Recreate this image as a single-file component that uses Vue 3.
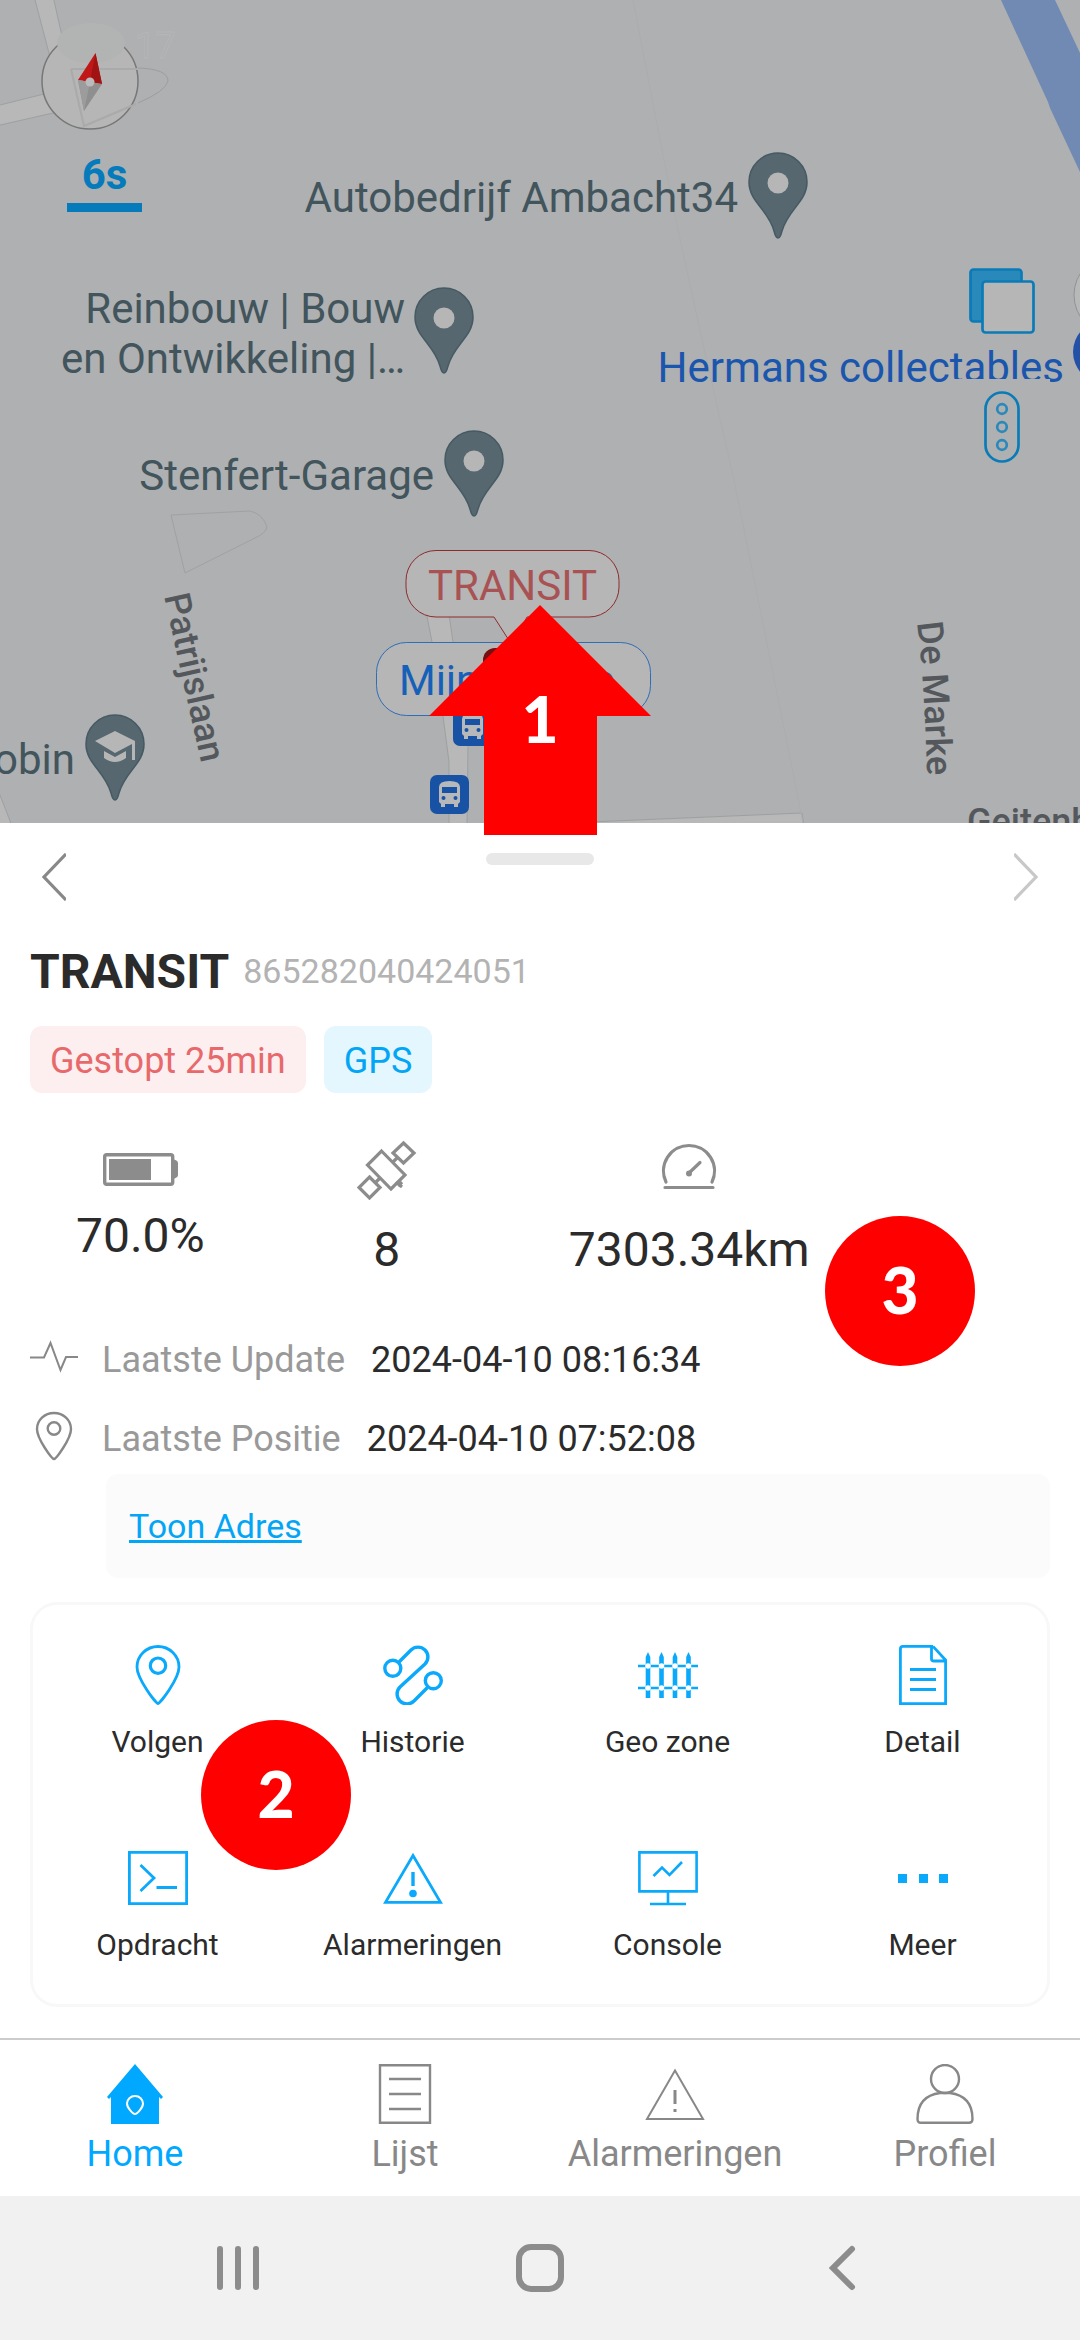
<template>
  <div class="app">
    <section class="map">
      <svg class="map-canvas" viewBox="0 0 1080 823">
        <!-- roads and water -->
        <g fill="#b7b8b7" stroke="#9da0a3" stroke-width="1">
          <path d="M-4 106 L48 93 L56 90 L50 57 L34 -4 H53 L64 45 L80 100 L53 113 L-4 126 Z" />
          <path d="M-2 790 L12 826 H-2 Z" />
          <path d="M420 580 L432 642 L443 716 L449 762 V826 H467 L468 745 L453 642 L444 580 Z" />
          <path d="M590 822 L802 813 L804 826 H590 Z" />
        </g>
        <path d="M1001 0 H1055 L1080 53 V172 L1050 108 L1048 102 Z" fill="#718ab3" />
        <path d="M633 0 L662 150 L678 230 L705 353 L734 480 L781 713 L803 823" fill="none" stroke="#abadae" />
        <path d="M171 515 L250 511 Q263 514 267 527 Q266 533 255 538 L185 573 Z" fill="none" stroke="#9fa1a2" />
        <path d="M138 68 Q168 69 168 81 Q166 91 138 103" fill="none" stroke="#9b9d9e" />

        <text x="135" y="58" class="clock">17</text>

        <!-- compass -->
        <circle cx="90" cy="81" r="48" fill="#b5b6b5" stroke="#777" stroke-width="1.5" />
        <ellipse cx="91" cy="43" rx="34" ry="20" fill="#b2b4b3" />
        <path d="M71 69 H138 M71 69 L84 126 L136 104" fill="none" stroke="#a9aaa9" stroke-width="2" />
        <path d="M95.500 53 L78 80 L102 84 Z" fill="#c01818" />
        <path d="M95.500 53 L90 82 L102 84 Z" fill="#a01414" />
        <path d="M84 111 L78 80 L102 84 Z" fill="#8f8f8f" />
        <path d="M84 111 L78 80 L90 82 Z" fill="#9c9c9c" />
        <circle cx="90" cy="82" r="4.500" fill="#bbb" />

        <!-- places -->
        <g class="place">
          <text x="738" y="212" text-anchor="end">Autobedrijf Ambacht34</text>
          <text x="405" y="323" text-anchor="end">Reinbouw | Bouw</text>
          <text x="405" y="373" text-anchor="end">en Ontwikkeling |…</text>
          <text x="434" y="490" text-anchor="end">Stenfert-Garage</text>
          <text x="75" y="774" text-anchor="end">Robin</text>
        </g>
        <g v-for="pin in pins" :key="pin.x" :transform="`translate(${pin.x} ${pin.y})`">
          <path
            d="M0 86 C-2 86 -3 83 -4 79 C-10 57 -29 50 -29 30 A29 29 0 0 1 29 30 C29 50 10 57 4 79 C3 83 2 86 0 86 Z"
            fill="#56676f"
            stroke="#465a63"
            stroke-width="1.5"
          />
          <circle v-if="!pin.school" cy="31" r="10.500" fill="#b6b6b6" />
          <g v-else fill="#b6b6b6">
            <path d="M0 17 L20 27 V46 H17 V30 L0 39 L-20 27 Z" />
            <path d="M-11 37 L0 43 L11 37 V44 Q0 52 -11 44 Z" />
          </g>
        </g>
        <text x="1064" y="382" text-anchor="end" class="shop">Hermans collectables</text>
        <path d="M948 379 H1050 V392 H948 Z" fill="#aeb0b1" />
        <circle cx="1114" cy="295" r="40" fill="#b7b9b9" stroke="#909394" />
        <circle cx="1104" cy="352" r="31" fill="#2450a8" />

        <!-- street names -->
        <path id="patrijslaan" d="M164 596 L211 807" fill="none" />
        <path id="demarke" d="M917 623 Q925 680 928 810" fill="none" />
        <g class="street">
          <text><textPath href="#patrijslaan">Patrijslaan</textPath></text>
          <text><textPath href="#demarke">De Marke</textPath></text>
          <text x="967" y="834">Geitenb</text>
        </g>

        <!-- bus stops -->
        <g v-for="stop in busStops" :key="stop.x" :transform="`translate(${stop.x} ${stop.y})`">
          <rect width="39" height="39" rx="7" fill="#1852a5" />
          <path d="M9 27 V12 Q9 6 19.500 6 Q30 6 30 12 V27 L28 29 V32 H24 V29 H15 V32 H11 V29 Z" fill="#b6b8ba" />
          <path d="M12 12 H27 V18 H12 Z" fill="#1852a5" />
          <circle cx="13.500" cy="23" r="2" fill="#1852a5" />
          <circle cx="25.500" cy="23" r="2" fill="#1852a5" />
        </g>

        <!-- bubbles -->
        <rect x="376.500" y="642.500" width="274" height="73" rx="30" fill="#b6b6b6" stroke="#2f6db8" />
        <text x="399" y="695" class="bubble-me">Mijn locatie</text>
        <rect x="483" y="648" width="60" height="40" rx="12" fill="#760f12" />
        <path
          d="M436 550.500 H589 A30 30 0 0 1 619 580.500 V587 A30 30 0 0 1 589 617 H527 L512 645 L494 617 H436 A30 30 0 0 1 406 587 V580.500 A30 30 0 0 1 436 550.500 Z"
          fill="#b6b6b6"
          stroke="#8f2a2c"
        />
        <text x="428" y="600" class="bubble-car">TRANSIT</text>
      </svg>

      <button class="refresh">6s</button>
      <div class="map-tools">
        <button aria-label="Kaartlagen">
          <svg width="66" height="66" viewBox="0 0 66 66" stroke="#0b7bb8" stroke-width="2.700">
            <rect x="1.500" y="1.500" width="51" height="52" rx="3" fill="#2a89bb" />
            <rect x="13.500" y="13.500" width="51" height="51" rx="3" fill="#b6b6b6" />
          </svg>
        </button>
        <button aria-label="Verkeer">
          <svg width="36" height="72" viewBox="0 0 36 72" fill="none" stroke="#0b7bb8" stroke-width="2.700">
            <rect x="1.500" y="1.500" width="33" height="69" rx="16.500" />
            <circle v-for="y in [18, 36, 54]" :key="y" cx="18" :cy="y" r="4.800" stroke="#2a89bb" />
          </svg>
        </button>
      </div>

      <div class="arrow">
        <svg width="222" height="230" viewBox="0 0 222 230">
          <path d="M111 0 L222 111 H168 V230 H55 V111 H0 Z" fill="#f00" />
        </svg>
        <span>1</span>
      </div>
    </section>

    <main class="panel">
      <header class="pager">
        <button aria-label="Vorige">
          <svg width="24" height="48" viewBox="0 0 24 48"><path d="M24 1 L2 24 L24 47" fill="none" stroke="#888" stroke-width="3.200" /></svg>
        </button>
        <span class="handle"></span>
        <button aria-label="Volgende">
          <svg width="24" height="48" viewBox="0 0 24 48"><path d="M0 1 L22 24 L0 47" fill="none" stroke="#c8c8c8" stroke-width="3.200" /></svg>
        </button>
      </header>

      <div class="title">
        <h1>TRANSIT</h1>
        <span>865282040424051</span>
      </div>

      <div class="badges">
        <span class="badge stopped">Gestopt 25min</span>
        <span class="badge gps">GPS</span>
      </div>

      <div class="stats">
        <div class="stat battery">
          <svg width="75" height="33" viewBox="0 0 75 33" fill="#8c8c8c">
            <rect x="1.700" y="1.700" width="68" height="29.600" rx="2" fill="none" stroke="#8c8c8c" stroke-width="3.400" />
            <path d="M6 6 H48 V27 H6 Z M69 6 Q75 7 75 10 V22 Q75 25 69 26 Z" />
          </svg>
          <span>70.0%</span>
        </div>
        <div class="stat">
          <svg width="60" height="60" viewBox="0 0 60 60" fill="none" stroke="#8c8c8c" stroke-width="3.200">
            <path d="M24.500 11 L48 35 L34 49 L10.500 25 Z" />
            <path d="M46.500 3 L57 13 L46.500 23 L36 13 Z" />
            <path d="M12.500 37 L23 47.500 L12.500 58 L2 47.500 Z" />
            <path d="M36 22 L41 17 M19 42 L23 38 M39 42 L45 47 M41 46 L45 42" />
          </svg>
          <span>8</span>
        </div>
        <div class="stat">
          <svg width="60" height="60" viewBox="0 0 60 60" fill="none" stroke="#8c8c8c" stroke-width="3.200" stroke-linecap="round">
            <path d="M7 42 A25.500 25.500 0 1 1 53 42 M6 47.500 H54 M30 33 L41 22.500" />
            <circle cx="30" cy="33.500" r="3" fill="#8c8c8c" stroke="none" />
          </svg>
          <span>7303.34km</span>
        </div>
      </div>

      <div class="info">
        <svg width="48" height="60" viewBox="0 0 48 60" fill="none" stroke="#888" stroke-width="2">
          <path d="M0 27.500 H14 L20.500 13 L30.500 40 L36 27 H48" />
        </svg>
        <span class="label">Laatste Update</span>
        <span>2024-04-10 08:16:34</span>
      </div>
      <div class="info">
        <svg width="48" height="60" viewBox="0 0 48 60" fill="none" stroke="#888" stroke-width="2.400">
          <path d="M24 50 C22 50 7 30 7 20 A17 16 0 0 1 41 20 C41 30 26 50 24 50 Z" />
          <circle cx="24" cy="19.500" r="6.300" />
        </svg>
        <span class="label">Laatste Positie</span>
        <span>2024-04-10 07:52:08</span>
      </div>
      <div class="address">
        <a href="#">Toon Adres</a>
      </div>

      <div class="actions">
        <button v-for="action in actions" :key="action.label" class="action">
          <svg width="60" height="60" viewBox="0 0 60 60" fill="none" stroke="#0aa9fb" stroke-width="2.800" v-html="action.icon"></svg>
          {{ action.label }}
        </button>
      </div>
    </main>

    <nav class="tabs">
      <a v-for="tab in tabs" :key="tab.label" href="#" class="tab" :class="{ active: tab.active }">
        <svg width="60" height="60" viewBox="0 0 60 60" fill="none" stroke="#888" stroke-width="2.400" v-html="tab.icon"></svg>
        {{ tab.label }}
      </a>
    </nav>

    <footer class="system">
      <button aria-label="Recent">
        <svg width="48" height="48" viewBox="0 0 48 48"><path d="M6 5 V43 M24 5 V43 M42 5 V43" /></svg>
      </button>
      <button aria-label="Start">
        <svg width="48" height="48" viewBox="0 0 48 48"><rect x="3" y="3" width="42" height="42" rx="12" /></svg>
      </button>
      <button aria-label="Terug">
        <svg width="48" height="48" viewBox="0 0 48 48"><path d="M34 5 L15 24 L34 43" /></svg>
      </button>
    </footer>

    <span class="marker two">2</span>
    <span class="marker three">3</span>
  </div>
</template>

<script setup>
import { ref } from 'vue';

const pins = ref([
  { x: 778, y: 152 },
  { x: 444, y: 287 },
  { x: 474, y: 430 },
  { x: 115, y: 714, school: true },
]);

const busStops = ref([
  { x: 453, y: 707 },
  { x: 430, y: 775 },
]);

const fencePosts = [10, 23.5, 37, 50.5]
  .map(
    (x) => `<path d="M${x - 2.3} 53 V12 L${x} 7 L${x + 2.3} 12 V53 Z" fill="#0aa9fb" stroke="none" />
      <circle cx="${x}" cy="21" r="2.8" fill="#fff" stroke="none" />
      <circle cx="${x}" cy="43" r="2.8" fill="#fff" stroke="none" />`
  )
  .join('');

const actions = ref([
  {
    label: 'Volgen',
    icon: '<path d="M30 58.500 C28 58.500 9 34 9 22 A21 20.500 0 0 1 51 22 C51 34 32 58.500 30 58.500 Z" /><circle cx="30" cy="20.700" r="7.700" stroke-width="3.200" />',
  },
  {
    label: 'Historie',
    icon: '<g stroke-width="3.400"><circle cx="9.800" cy="23.300" r="8" /><circle cx="50.300" cy="35.700" r="8" /><path d="M16 17 L28 5 A9.700 9.700 0 0 1 42 19 L17 42 A9.700 9.700 0 0 0 31 56 L44.500 42.500" /></g>',
  },
  {
    label: 'Geo zone',
    icon: '<path d="M0 21 H60 M0 43 H60" stroke-width="2.400" />' + fencePosts,
  },
  {
    label: 'Detail',
    icon: '<path d="M40 1.400 H10 Q7.400 1.400 7.400 4 V58.600 H52.600 V15 L40 1.400 M38.500 2 V14 Q38.500 16 41 16 H52 M17 24.500 H43 M17 34.500 H43 M17 44.500 H43" />',
  },
  {
    label: 'Opdracht',
    icon: '<path d="M1.400 4.400 H58.600 V55.600 H1.400 Z M12.500 17 L26 30 L12.500 43 M28.500 39.500 H49" />',
  },
  {
    label: 'Alarmeringen',
    icon: '<path d="M30 7.500 L57.500 54.400 H2.500 Z" /><path d="M30 24 V38" stroke-width="3.400" /><circle cx="30" cy="45.500" r="3.800" fill="#0aa9fb" stroke="none" />',
  },
  {
    label: 'Console',
    icon: '<path d="M1.400 4.400 H58.600 V43.400 H1.400 Z M30 43 V56 M12 56 H48 M15.500 28 L24 19.500 L31.500 27 L44 14" stroke-width="2.600" />',
  },
  {
    label: 'Meer',
    icon: '<path d="M5 26 h9 v9 h-9 Z M26 26 h9 v9 h-9 Z M46 26 h9 v9 h-9 Z" fill="#0aa9fb" stroke="none" />',
  },
]);

const tabs = ref([
  {
    label: 'Home',
    active: true,
    icon: '<path d="M30 0 L58 33 L56 35 L54 33 V60 H6 V33 L4 35 L2 33 Z" fill="#00a8ff" stroke="none" /><path d="M30 50 C28 50 22 44 22 39.500 A8 7.500 0 0 1 38 39.500 C38 44 32 50 30 50 Z" stroke="#fff" stroke-width="2" />',
  },
  {
    label: 'Lijst',
    icon: '<path d="M5 1.200 H55 V58.800 H5 Z M14 15 H46 M14 30 H46 M14 45 H46" />',
  },
  {
    label: 'Alarmeringen',
    icon: '<path d="M30 6.500 L58 55 H2 Z" stroke-width="2" /><path d="M30 26 V40 M30 45 V48" stroke-width="3" />',
  },
  {
    label: 'Profiel',
    icon: '<circle cx="30" cy="15" r="14" /><path d="M25 29 Q2.500 32 2.500 55 Q2.500 58.800 6 58.800 H54 Q57.500 58.800 57.500 55 Q57.500 32 35 29 Z" />',
  },
]);
</script>

<style>
body {
  background-color: #fff;
}
</style>

<style scoped>
.app {
  position: relative;
  font-family: Roboto, "Liberation Sans", sans-serif;
  color: #2b2b2b;
}

svg {
  display: block;
}

button {
  padding: 0;
  border: none;
  background: none;
  font-family: inherit;
  color: inherit;
}

a {
  text-decoration: none;
}

/* map */
.map {
  position: relative;
  background-color: #aeb0b1;
}

.map-canvas {
  width: 100%;
}

.clock {
  font-size: 36px;
  fill: none;
  stroke: #b4b6b7;
}

.place {
  font-size: 42px;
  fill: #42545c;
}

.shop {
  font-size: 42px;
  fill: #1a56ad;
}

.street {
  font-size: 36px;
  font-weight: 500;
  fill: #54585c;
}

.bubble-me {
  font-size: 42px;
  fill: #1560b8;
}

.bubble-car {
  font-size: 42px;
  fill: #a95254;
}

.refresh {
  position: absolute;
  left: 67px;
  top: 150px;
  width: 75px;
  height: 62px;
  line-height: 50px;
  padding-bottom: 3px;
  border-bottom: 9px solid #057bbb;
  font-size: 42px;
  font-weight: 700;
  color: #057bbb;
}

.map-tools {
  position: absolute;
  right: 45px;
  top: 268px;
  display: flex;
  flex-direction: column;
  align-items: center;
  gap: 57px;
}

.arrow {
  position: absolute;
  left: 50%;
  top: 605px;
  width: 222px;
  margin-left: -111px;
}

.arrow span {
  position: absolute;
  left: 0;
  top: 75px;
  width: 100%;
  line-height: 78px;
  text-align: center;
  font-family: Lato, sans-serif;
  font-size: 64px;
  font-weight: 900;
  color: #fff;
}

/* panel */
.panel {
  padding: 30px 30px 31px;
}

.pager {
  display: flex;
  justify-content: space-between;
  padding: 0 12px;
}

.handle {
  width: 108px;
  height: 12px;
  border-radius: 6px;
  background-color: #e8e8e8;
}

.title {
  display: flex;
  align-items: center;
  gap: 14px;
  margin-top: 43px;
}

h1 {
  margin: 0;
  font-size: 48px;
  line-height: 56px;
  font-weight: 700;
}

.title span {
  padding-bottom: 3px;
  font-size: 34px;
  color: #b3b3b3;
}

.badges {
  display: flex;
  gap: 18px;
  margin-top: 26px;
}

.badge {
  padding: 4px 20px 0;
  border-radius: 12px;
  font-size: 36px;
  line-height: 63px;
}

.stopped {
  color: #e8696b;
  background-color: #fdeff0;
}

.gps {
  color: #03a5f5;
  background-color: #e4f6fe;
}

.stats {
  display: flex;
  gap: 152px;
  margin-top: 47px;
  padding-left: 46px;
}

.stat {
  display: flex;
  flex-direction: column;
  align-items: center;
  gap: 22px;
  font-size: 48px;
  line-height: 56px;
}

.battery {
  padding-top: 13px;
}

.info {
  display: flex;
  align-items: center;
  height: 60px;
  margin-top: 19px;
  font-size: 36px;
}

.stats + .info {
  margin-top: 52px;
}

.label {
  margin: 0 26px 0 24px;
  color: #999;
}

.address {
  margin: 5px 0 0 76px;
  padding: 0 23px;
  border-radius: 12px;
  background-color: #fbfbfb;
  font-size: 34px;
  line-height: 104px;
}

.address a {
  color: #03a5f5;
  text-decoration: underline;
}

.actions {
  display: grid;
  grid-template-columns: repeat(4, 1fr);
  row-gap: 88px;
  margin-top: 24px;
  padding: 43px 0 44px;
  border-radius: 27px;
  box-shadow: inset 0 0 0 3px #f8f8f8;
}

.action {
  display: flex;
  flex-direction: column;
  align-items: center;
  gap: 19px;
  font-size: 30px;
  line-height: 36px;
}

/* bottom bars */
.tabs {
  display: grid;
  grid-template-columns: repeat(4, 1fr);
  padding: 24px 0 21px;
  border-top: 2px solid #ccc;
}

.tab {
  display: flex;
  flex-direction: column;
  align-items: center;
  gap: 9px;
  font-size: 36px;
  line-height: 42px;
  color: #888;
}

.tab.active {
  color: #00a8ff;
}

.system {
  display: flex;
  justify-content: center;
  align-items: center;
  height: 144px;
  background-color: #f1f1f1;
}

.system button {
  display: flex;
  justify-content: center;
  width: 28%;
}

.system svg {
  fill: none;
  stroke: #8c8c8c;
  stroke-width: 6;
  stroke-linecap: round;
}

/* numbered markers */
.marker {
  position: absolute;
  width: 150px;
  height: 150px;
  border-radius: 50%;
  background-color: #f00;
  font-family: Lato, sans-serif;
  font-size: 64px;
  font-weight: 900;
  line-height: 147px;
  text-align: center;
  color: #fff;
}

.two {
  left: 201px;
  top: 1720px;
}

.three {
  left: 825px;
  top: 1216px;
}
</style>
